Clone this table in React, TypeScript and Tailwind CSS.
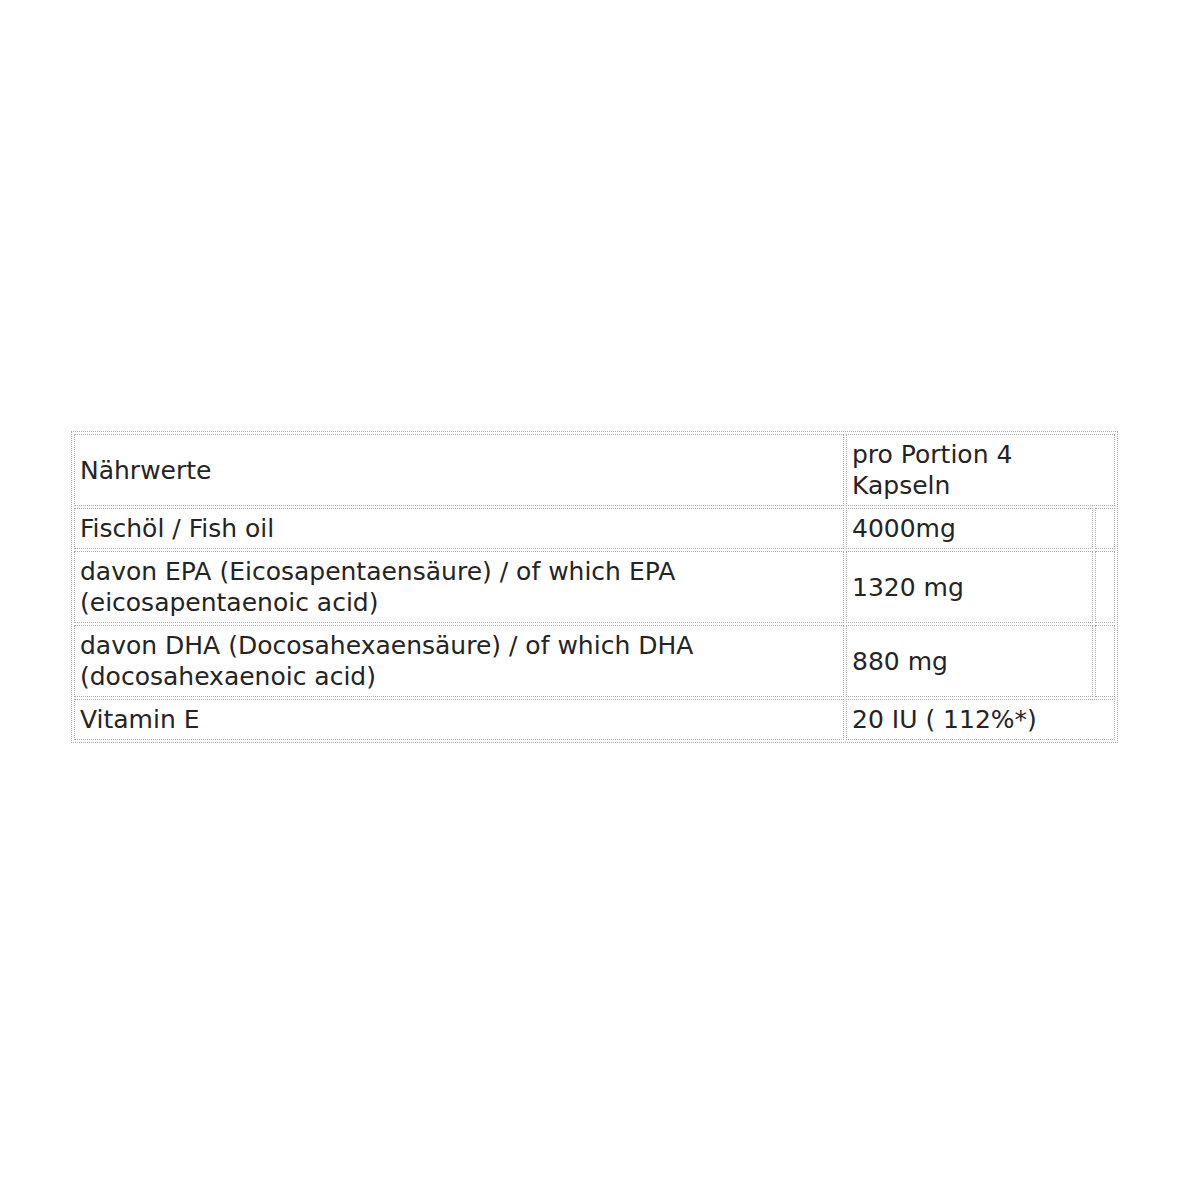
import React from "react";

const cell =
  "border border-dotted border-[#acacac] px-[5px] py-[4px] align-middle text-left font-normal";

export default function App() {
  return (
    <div className="w-[1200px] h-[1200px] bg-white pt-[431px] pl-[71px]">
      <table
        className="w-[1047px] border-separate border-spacing-[2px] border border-dotted border-[#acacac] text-[#242424] text-[25px] leading-[31px]"
        style={{ fontFamily: '"DejaVu Sans", Verdana, sans-serif' }}
      >
        <tbody>
          <tr>
            <td className={`${cell} w-[770px]`}>Nährwerte</td>
            <td className={cell} colSpan={2}>
              pro Portion 4
              <br />
              Kapseln
            </td>
          </tr>
          <tr>
            <td className={`${cell} py-[2px]`}>Fischöl / Fish oil</td>
            <td className={`${cell} py-[2px]`}>4000mg</td>
            <td className={`${cell} w-[20px] p-0`}></td>
          </tr>
          <tr>
            <td className={cell}>
              davon EPA (Eicosapentaensäure) / of which EPA
              <br />
              (eicosapentaenoic acid)
            </td>
            <td className={cell}>1320 mg</td>
            <td className={`${cell} p-0`}></td>
          </tr>
          <tr>
            <td className={cell}>
              davon DHA (Docosahexaensäure) / of which DHA
              <br />
              (docosahexaenoic acid)
            </td>
            <td className={cell}>880 mg</td>
            <td className={`${cell} p-0`}></td>
          </tr>
          <tr>
            <td className={cell}>Vitamin E</td>
            <td className={cell} colSpan={2}>
              20 IU ( 112%*)
            </td>
          </tr>
        </tbody>
      </table>
    </div>
  );
}
